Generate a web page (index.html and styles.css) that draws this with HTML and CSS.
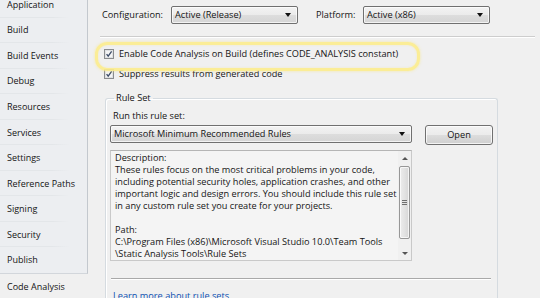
FILE: index.html
```html
<!DOCTYPE html>
<html lang="en">
<head>
  <meta charset="UTF-8">
  <meta name="viewport" content="width=device-width, initial-scale=1">
  <title>Code Analysis</title>
  <link rel="stylesheet" href="styles.css">
</head>
<body>
  <div class="designer">

    <!-- project designer tabs -->
    <nav class="tabs">
      <ul class="tab-list">
        <li>Application</li>
        <li>Build</li>
        <li>Build Events</li>
        <li>Debug</li>
        <li>Resources</li>
        <li>Services</li>
        <li>Settings</li>
        <li>Reference Paths</li>
        <li>Signing</li>
        <li>Security</li>
        <li>Publish</li>
      </ul>
      <div class="tab-current">Code Analysis</div>
    </nav>

    <main class="panel">
      <div class="config-row">
        <span class="config-label">Configuration:</span>
        <div class="combo combo-config">Active (Release)<span class="arrow"></span></div>
        <span class="platform-label">Platform:</span>
        <div class="combo combo-platform">Active (x86)<span class="arrow"></span></div>
      </div>
      <div class="divider"></div>

      <label class="check-row check-first">
        <svg class="check" width="10" height="10" viewBox="0 0 10 10">
          <rect x="0.5" y="0.5" width="9" height="9" fill="#f4f4f4" stroke="#8a8c8e"/>
          <rect x="1.5" y="1.5" width="7" height="7" fill="none" stroke="#dfe1e3"/>
          <path d="M2.6 5.1 L4.2 7.2 L7.6 2.4" fill="none" stroke="#3c4b66" stroke-width="1.3"/>
        </svg>
        Enable Code Analysis on Build (defines CODE_ANALYSIS constant)
      </label>
      <label class="check-row check-second">
        <svg class="check" width="10" height="10" viewBox="0 0 10 10">
          <rect x="0.5" y="0.5" width="9" height="9" fill="#f4f4f4" stroke="#8a8c8e"/>
          <rect x="1.5" y="1.5" width="7" height="7" fill="none" stroke="#dfe1e3"/>
          <path d="M2.6 5.1 L4.2 7.2 L7.6 2.4" fill="none" stroke="#3c4b66" stroke-width="1.3"/>
        </svg>
        Suppress results from generated code
      </label>

      <!-- yellow callout drawn over the first option -->
      <div class="highlight"></div>

      <fieldset class="rule-set">
        <legend>Rule Set</legend>
        <div class="caption">Run this rule set:</div>
        <div class="rule-row">
          <div class="combo combo-rules">Microsoft Minimum Recommended Rules<span class="arrow"></span></div>
          <button class="btn-open">Open</button>
        </div>
        <div class="desc">
          <div class="desc-text">
            Description:<br>
            These rules focus on the most critical problems in your code,<br>
            including potential security holes, application crashes, and other<br>
            important logic and design errors. You should include this rule set<br>
            in any custom rule set you create for your projects.<br>
            <br>
            Path:<br>
            C:\Program Files (x86)\Microsoft Visual Studio 10.0\Team Tools<br>
            \Static Analysis Tools\Rule Sets
          </div>
          <div class="scrollbar">
            <span class="sb-btn sb-up"></span>
            <div class="sb-track">
              <div class="sb-thumb"><span class="grip"></span></div>
            </div>
            <span class="sb-btn sb-down"></span>
          </div>
        </div>
        <div class="sep"></div>
        <a href="#" class="learn">Learn more about rule sets</a>
      </fieldset>
    </main>
  </div>
</body>
</html>
```

FILE: styles.css
```css
:root {
  --bg: #f0f0f0;
  --text: #141414;
  --side: #eceef1;
  --side-border: #c3c8ce;
  --ctl-border: #707070;
  --line: 12px;
}
*, *::before, *::after { box-sizing: border-box; margin: 0; padding: 0; }
html, body { width: 540px; height: 298px; overflow: hidden; }
body {
  background: var(--bg);
  color: var(--text);
  font-family: 'Open Sans', 'Noto Sans', sans-serif;
  font-size: 9.2px;
  line-height: var(--line);
}
.designer {
  display: flex;
  height: 100%;
}

/* tabs */
.tabs {
  width: 88px;
  flex-shrink: 0;
}
.tab-list {
  list-style: none;
  margin-top: -8px;
  background: var(--side);
  border-right: 1px solid var(--side-border);
  border-bottom: 1px solid #d2d6db;
}
.tab-list li,
.tab-current {
  height: 25.55px;
  display: flex;
  align-items: center;
  padding-left: 7px;
  font-size: 9px;
  white-space: nowrap;
}
.tab-list li {
  background: linear-gradient(to right, #e3e6e9 0, #e3e6e9 60%, transparent 80%) no-repeat left bottom / 100% 1px;
}
.tab-list li:last-child { background: none; }

/* main panel */
.panel {
  flex: 1;
  position: relative;
  padding: 6px 0 0 12px;
}
.config-row {
  display: flex;
  align-items: center;
  height: 18px;
  padding-left: 2px;
}
.config-label { width: 69px; }
.platform-label { width: 47px; margin-left: 18px; }
.combo {
  display: flex;
  align-items: center;
  justify-content: space-between;
  height: 18px;
  padding: 0 6px 0 3px;
  border: 1px solid var(--ctl-border);
  border-radius: 2px;
  background: linear-gradient(#f3f3f3, #ebebeb 50%, #dddddd 51%, #d5d5d5);
  box-shadow: inset 0 0 0 1px rgba(255,255,255,0.7);
  white-space: nowrap;
}
.combo .arrow {
  width: 0; height: 0;
  border-left: 3px solid transparent;
  border-right: 3px solid transparent;
  border-top: 4px solid #111;
}
.combo-config,
.combo-platform { width: 127px; }
.divider {
  margin-top: 12px;
  height: 2px;
  border-top: 1px solid #cdcdcd;
  border-bottom: 1px solid #fff;
  margin-right: 5px;
}

.check-row {
  display: flex;
  align-items: center;
  gap: 5px;
  height: 14px;
  padding-left: 4px;
  white-space: nowrap;
}
.check-first { margin-top: 9px; }
.check-second { margin-top: 6px; }
.check { flex-shrink: 0; }

.highlight {
  position: absolute;
  left: 7px;
  top: 42px;
  width: 325px;
  height: 29px;
  border: 3px solid rgba(252, 236, 140, 0.9);
  border-radius: 12px;
  box-shadow: 0 0 3px rgba(250, 232, 130, 0.7), inset 0 0 2px rgba(250, 232, 130, 0.5);
  pointer-events: none;
}

/* rule set group */
.rule-set {
  margin: 11px 0 0 5px;
  width: 393px;
  border: 1px solid #d5dbe0;
  border-bottom: none;
  border-radius: 3px 3px 0 0;
  padding: 6px 4px 0;
  box-shadow: inset 1px 1px 0 #fff;
}
.rule-set legend {
  margin-left: 4px;
  padding: 0 2px;
  line-height: var(--line);
}
.caption { padding-left: 3px; }
.rule-row {
  display: flex;
  align-items: flex-start;
  gap: 13px;
  margin-top: 3px;
}
.combo-rules { width: 302px; }
.btn-open {
  width: 68px;
  height: 20px;
  font: inherit;
  color: var(--text);
  border: 1px solid var(--ctl-border);
  border-radius: 3px;
  background: linear-gradient(#f2f2f2, #ebebeb 50%, #dddddd 51%, #cfcfcf);
  box-shadow: inset 0 0 0 1px rgba(255,255,255,0.75);
}

.desc {
  display: flex;
  width: 302px;
  height: 111px;
  margin-top: 5px;
  border: 1px solid #c9c9c9;
  border-top-color: #b5b5b5;
  background: #f4f4f4;
}
.desc-text {
  flex: 1;
  padding: 1px 0 0 4px;
  white-space: nowrap;
  overflow: hidden;
}
.scrollbar {
  width: 13px;
  display: flex;
  flex-direction: column;
  background: #f0f0f0;
}
.sb-btn {
  height: 14px;
  display: flex;
  align-items: center;
  justify-content: center;
}
.sb-btn::after {
  content: '';
  border-left: 3px solid transparent;
  border-right: 3px solid transparent;
}
.sb-up::after { border-bottom: 3px solid #555; }
.sb-down::after { border-top: 3px solid #555; }
.sb-track {
  flex: 1;
  padding: 1px 1px 0;
}
.sb-thumb {
  height: 73px;
  border: 1px solid #979797;
  border-radius: 2px;
  background: linear-gradient(to right, #ececec, #e2e2e2 50%, #d6d6d6);
  box-shadow: inset 0 0 0 1px rgba(255,255,255,0.7);
  display: flex;
  align-items: center;
  justify-content: center;
}
.grip {
  width: 5px;
  height: 5px;
  background: repeating-linear-gradient(#6f6f6f 0 1px, transparent 1px 2px);
}

.sep {
  margin: 17px 2px 0 1px;
  height: 2px;
  border-top: 1px solid #a9a9a9;
  border-bottom: 1px solid #fff;
}
.learn {
  display: inline-block;
  margin: 10px 0 0 3px;
  color: #0b4fb0;
  text-decoration: underline;
}
```
